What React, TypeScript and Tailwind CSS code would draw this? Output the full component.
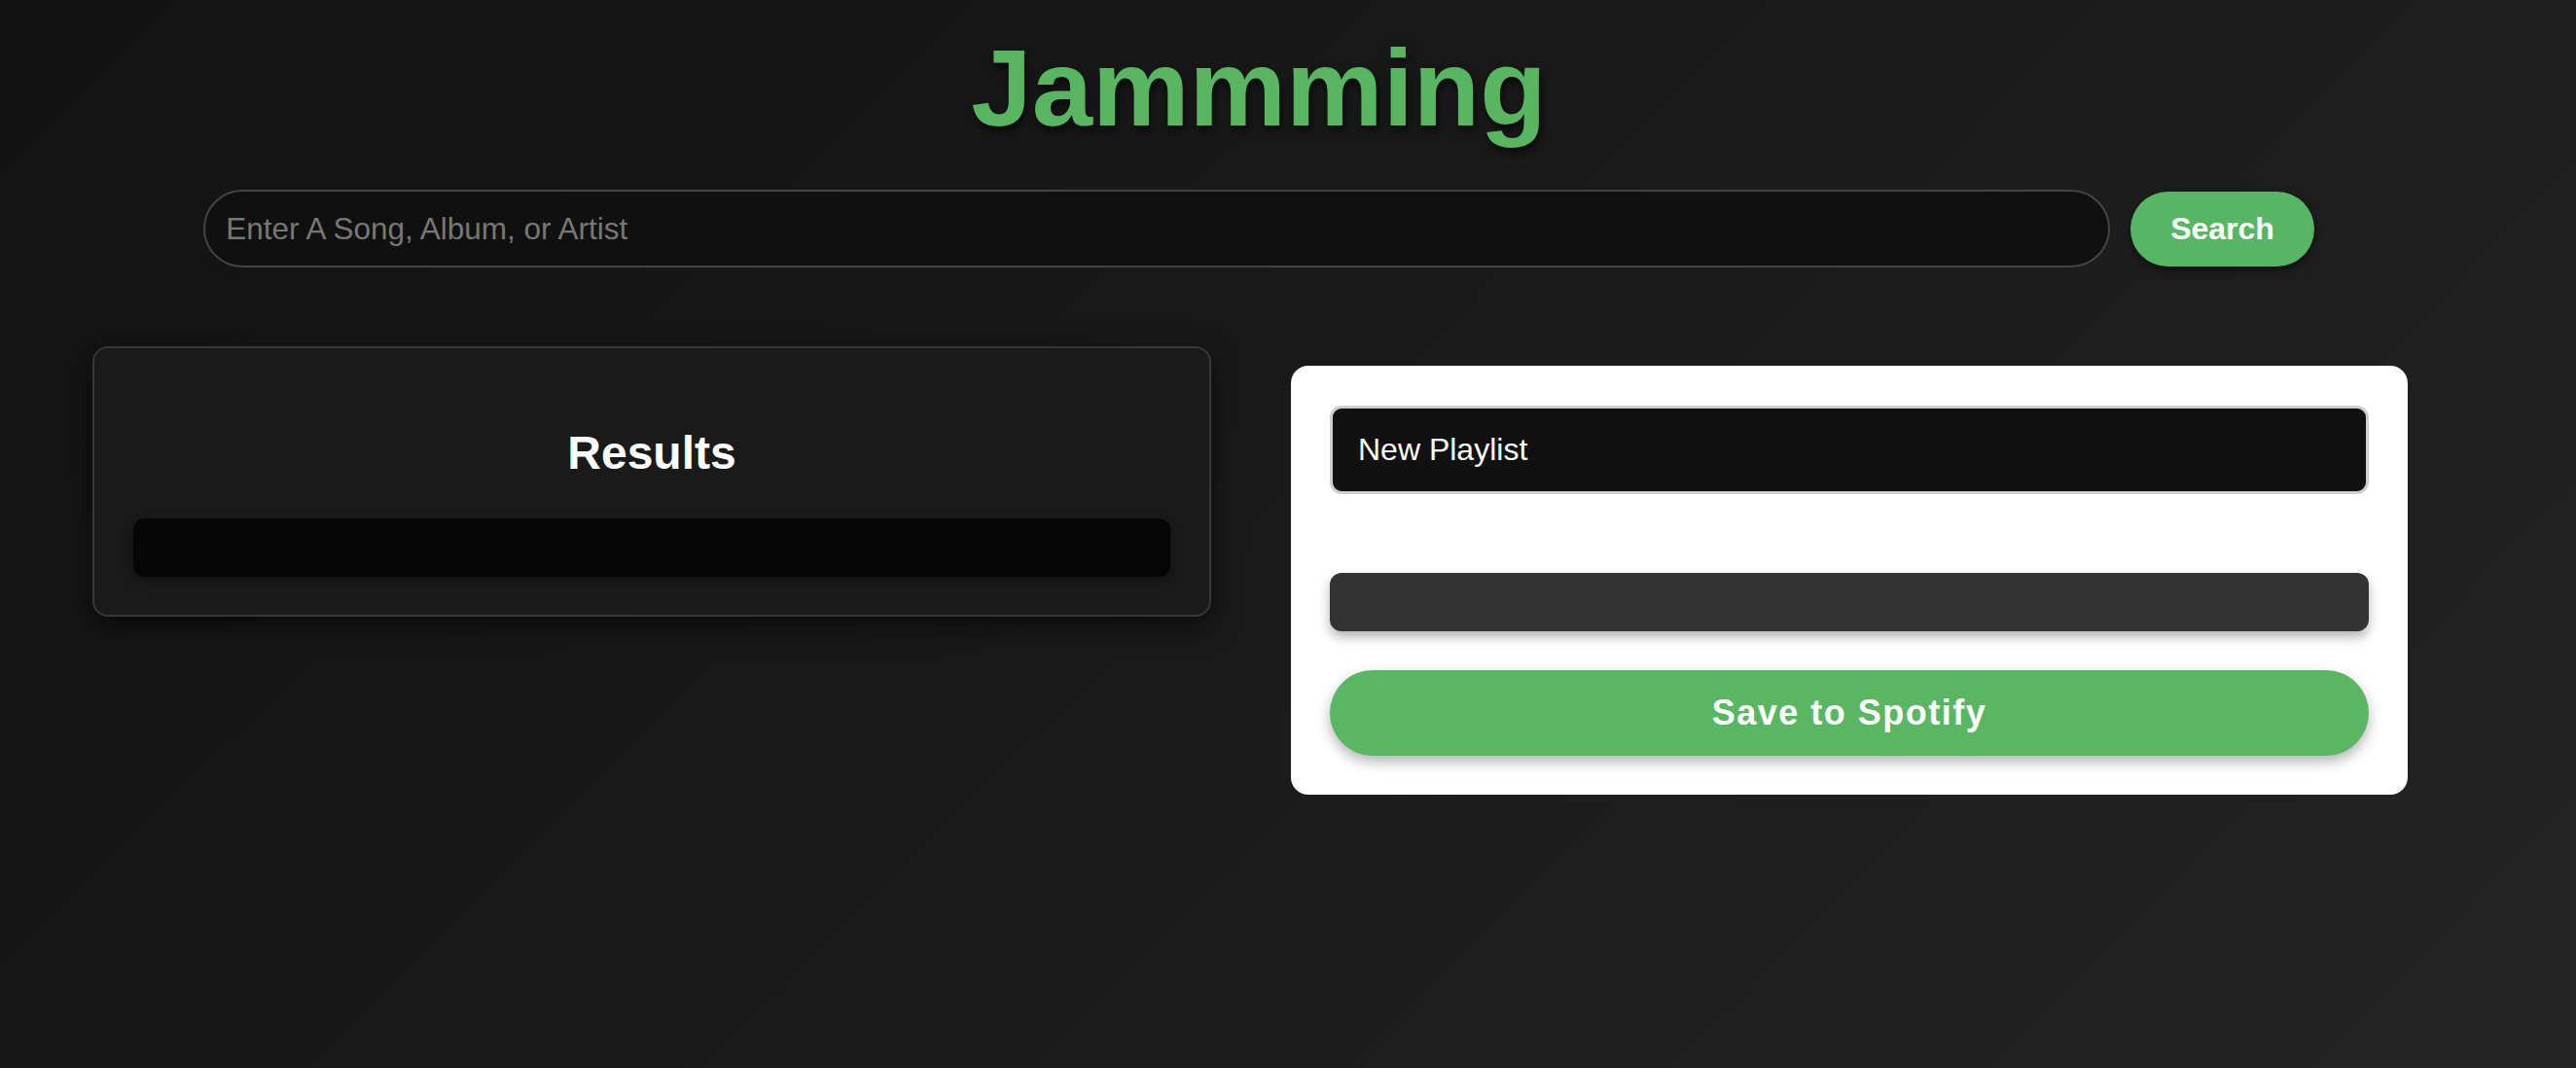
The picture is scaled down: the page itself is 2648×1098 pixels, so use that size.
import React from "react";

export default function App() {
  return (
    <div
      className="min-h-[1098px] w-full bg-[linear-gradient(135deg,#121212_0%,#1a1a1a_50%,#242424_100%)] text-white"
      style={{ fontFamily: '"Liberation Sans", Arial, Helvetica, sans-serif' }}
    >
      <div className="w-[2588px] flex flex-col items-center">
        <h1 className="mt-[26px] text-[112px] leading-[129px] font-bold text-[#57b65f] [text-shadow:2px_5px_8px_rgba(0,0,0,0.6)]">
          Jammming
        </h1>
        <div className="mt-[40px] flex items-center gap-[21px]">
          <input
            type="text"
            placeholder="Enter A Song, Album, or Artist"
            className="w-[1960px] h-[80px] rounded-full border-2 border-[#444] bg-[#101010] pl-[21px] pr-6 text-[31.5px] text-white placeholder:text-[#777] outline-none"
          />
          <button className="h-[77px] px-[41px] rounded-full bg-[#57b663] text-[32px] font-bold text-white shadow-[0_4px_10px_rgba(0,0,0,0.45)]">
            Search
          </button>
        </div>
      </div>

      <div className="mt-[81px] pl-[95px] flex items-start gap-[82px]">
        <div className="w-[1150px] rounded-[16px] border-2 border-[#383838] bg-[#1a1a1a] px-[40px] pb-[39px] pt-[40px] shadow-[0_10px_30px_rgba(0,0,0,0.55)] flex flex-col">
          <h2 className="mt-[40px] mb-[40px] text-center text-[48px] leading-[55px] font-bold text-white">
            Results
          </h2>
          <div className="h-[60px] rounded-[12px] bg-[#050505] shadow-[0_4px_12px_rgba(0,0,0,0.35)]" />
        </div>

        <div className="mt-[20px] w-[1148px] rounded-[18px] bg-white px-[40px] pt-[41px] pb-[40px] flex flex-col">
          <input
            type="text"
            defaultValue="New Playlist"
            className="h-[91px] w-full rounded-[12px] border-[3px] border-[#cfcfcf] bg-[#111111] px-[26px] text-[32px] text-white outline-none"
          />
          <div className="mt-[81px] h-[60px] rounded-[12px] bg-[#333333] shadow-[0_6px_12px_rgba(0,0,0,0.3)]" />
          <button className="mt-[40px] h-[88px] w-full rounded-full bg-[#59b662] text-[36px] font-bold tracking-[1.5px] text-white shadow-[0_6px_14px_rgba(0,0,0,0.3)]">
            Save to Spotify
          </button>
        </div>
      </div>
    </div>
  );
}
